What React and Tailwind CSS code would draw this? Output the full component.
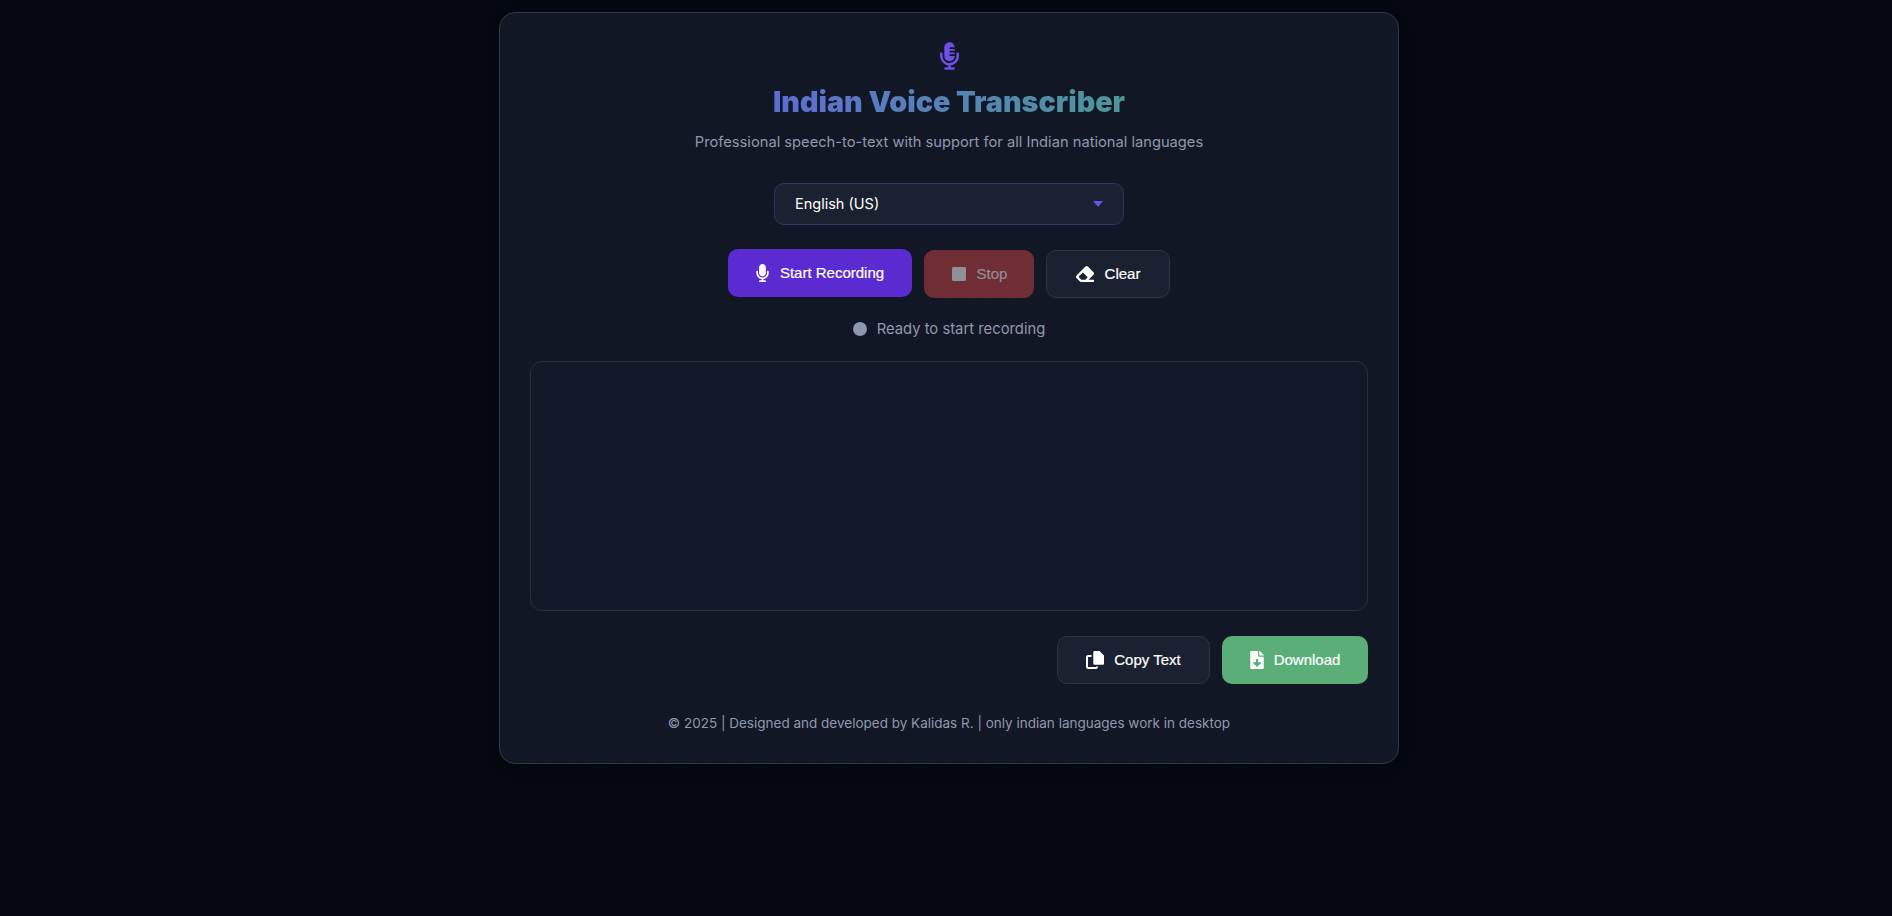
import React from "react";
import { FaMicrophoneAlt, FaMicrophone, FaStop, FaEraser, FaFileDownload } from "react-icons/fa";

const btn = "flex items-center justify-center rounded-[10px] text-[15px] font-['Liberation_Sans',Arial,sans-serif] [-webkit-text-stroke:0.2px_currentColor]";

function CopyIcon() {
  return (
    <svg viewBox="0 0 18 18" className="w-[18px] h-[18px]" aria-hidden="true">
      <path d="M8.5 0H13.5L18 4.5V12.5a1.2 1.2 0 0 1-1.2 1.2H8.5a1.2 1.2 0 0 1-1.2-1.2V1.2A1.2 1.2 0 0 1 8.5 0Z" fill="currentColor" />
      <path d="M5.5 5H2.2a1.2 1.2 0 0 0-1.2 1.2V15.8a1.2 1.2 0 0 0 1.2 1.2H9.8a1.2 1.2 0 0 0 1.2-1.2V15.5" fill="none" stroke="currentColor" strokeWidth="2" />
    </svg>
  );
}

export default function App() {
  return (
    <div className="h-[916px] overflow-hidden bg-[#050711] flex justify-center items-start pt-3 pl-[6px] font-['Inter',sans-serif]">
      <div className="w-[900px] h-[752px] rounded-2xl border border-[#333745] bg-[#121725] bg-[radial-gradient(#171a2b_1px,transparent_1px)] bg-[length:20px_20px] px-[30px] pt-[29px] flex flex-col items-center shadow-[0_4px_16px_rgba(0,0,0,0.1)]">
        <FaMicrophoneAlt className="text-[#6d4fe6] w-[19px] h-[28px]" />
        <h1 className="mt-[14px] h-[36px] leading-[36px] text-[28.7px] font-black bg-gradient-to-r from-[#5d6cd4] to-[#4f9696] bg-clip-text text-transparent">Indian Voice Transcriber</h1>
        <p className="mt-[10px] h-[24px] leading-[24px] text-[14.7px] text-[#8f99ad]">Professional speech-to-text with support for all Indian national languages</p>
        <div className="mt-[29px] w-[350px] h-[42px] rounded-[10px] border border-[#33306b] bg-[#1a2130] px-[20px] flex items-center justify-between">
          <span className="text-[14.5px] text-white">English (US)</span>
          <span className="w-0 h-0 border-l-[5px] border-r-[5px] border-t-[6px] border-l-transparent border-r-transparent border-t-[#6d4fe6]" />
        </div>
        <div className="mt-[25px] flex items-center gap-[12px]">
          <button className={`${btn} w-[184px] h-[48px] -translate-y-px bg-[#5a2bd0] text-white gap-[11px]`}>
            <FaMicrophone className="w-[13px] h-[18px]" />Start Recording
          </button>
          <button className={`${btn} w-[110px] h-[48px] bg-[#712d34] text-[#8f8f95] gap-[10px]`}>
            <FaStop className="w-[16px] h-[16px]" />Stop
          </button>
          <button className={`${btn} w-[124px] h-[48px] bg-[#1a2130] border border-[#2d3340] text-white gap-[11px]`}>
            <FaEraser className="w-[18px] h-[18px]" />Clear
          </button>
        </div>
        <div className="mt-[19px] h-[24px] flex items-center gap-[10px]">
          <span className="w-[14px] h-[14px] rounded-full bg-[#8d97ad]" />
          <span className="text-[14.8px] text-[#8f99ad]">Ready to start recording</span>
        </div>
        <div className="mt-[20px] w-full h-[250px] rounded-xl border border-[#2a2f3d] bg-[#111827]" />
        <div className="mt-[25px] w-full flex justify-end gap-[12px]">
          <button className={`${btn} w-[153px] h-[48px] bg-[#1a2130] border border-[#2d3340] text-white gap-[10px]`}>
            <CopyIcon />Copy Text
          </button>
          <button className={`${btn} w-[146px] h-[48px] bg-[#5aae78] text-white gap-[10px]`}>
            <FaFileDownload className="w-[14px] h-[18px]" />Download
          </button>
        </div>
        <p className="mt-[27px] h-[24px] leading-[24px] text-[13.5px] text-[#8f99ad]">© 2025 | Designed and developed by Kalidas R. | only indian languages work in desktop</p>
      </div>
    </div>
  );
}
